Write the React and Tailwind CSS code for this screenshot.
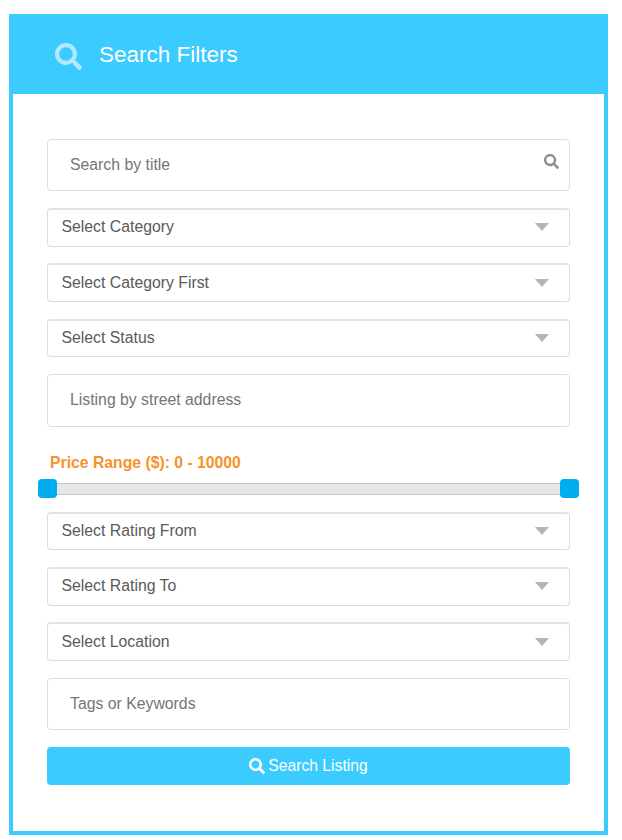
import { FaSearch } from 'react-icons/fa';

function SelectBox({ label, className }) {
    return (
        <div className={`flex items-center justify-between rounded border border-[#dddddd] border-t-2 border-t-[#e3e3e3] bg-white pl-[13.5px] pr-[20px] text-[15.8px] text-[#5a5a5a] ${className}`}>
            <span>{label}</span>
            <span className="h-0 w-0 border-x-[7.5px] border-t-[8px] border-x-transparent border-t-[#b4b4b9]" />
        </div>
    );
}

function TextBox({ label, className, children }) {
    return (
        <div className={`relative flex items-center rounded border border-[#dddddd] bg-white pl-[22px] text-[15.8px] text-[#757575] ${className}`}>
            <span>{label}</span>
            {children}
        </div>
    );
}

export default function App() {
    return (
        <div className="min-h-[840px] bg-white pl-[9px] pt-[14px] font-['Liberation_Sans',Arial,sans-serif]">
            <div className="h-[821px] w-[599px] border-x-4 border-b-4 border-[#3bcbff]">
                {/* Header */}
                <header className="-mx-[4px] flex h-[80px] items-center bg-[#3bcbff] pl-[46px] text-white">
                    <FaSearch className="mt-[5px] h-[27px] w-[27px] text-[#b1e9ff]" />
                    <h2 className="ml-[17px] mt-[2px] text-[22.5px] leading-none">Search Filters</h2>
                </header>

                {/* Filters */}
                <div className="flex flex-col px-[34px] pt-[45px]">
                    <TextBox label="Search by title" className="h-[52px]">
                        <FaSearch className="absolute right-[10px] top-[14px] h-[15px] w-[15px] text-[#8d8d8d]" />
                    </TextBox>
                    <SelectBox label="Select Category" className="mt-[17px] h-[39px] pb-[2px]" />
                    <SelectBox label="Select Category First" className="mt-[16px] h-[39px]" />
                    <SelectBox label="Select Status" className="mt-[17px] h-[38px] pb-[2px]" />
                    <TextBox label="Listing by street address" className="mt-[17px] h-[53px] pb-[1px]" />

                    <label className="ml-[3px] mt-[27px] text-[15.75px] font-bold leading-[18px] text-[#f7922a]">
                        Price Range ($): 0 - 10000
                    </label>
                    <div className="relative -mx-[9px] mt-[7px] h-[19px]">
                        <div className="absolute inset-x-[9px] top-[4px] h-[12px] border-y border-[#c4c4c4] bg-[#e6e6e6]" />
                        <div className="absolute left-0 top-0 h-[19px] w-[19px] rounded bg-[#00aeef]" />
                        <div className="absolute right-0 top-0 h-[19px] w-[19px] rounded bg-[#00aeef]" />
                    </div>

                    <SelectBox label="Select Rating From" className="mt-[14px] h-[38px] pb-[2px]" />
                    <SelectBox label="Select Rating To" className="mt-[17px] h-[39px] pb-[2px]" />
                    <SelectBox label="Select Location" className="mt-[16px] h-[39px]" />
                    <TextBox label="Tags or Keywords" className="mt-[17px] h-[52px]" />

                    <button className="mt-[17px] flex h-[38px] items-center justify-center gap-[3px] rounded bg-[#3bcbff] text-[15.7px] text-white">
                        <FaSearch className="h-[16px] w-[16px]" />
                        <span>Search Listing</span>
                    </button>
                </div>
            </div>
        </div>
    );
}
